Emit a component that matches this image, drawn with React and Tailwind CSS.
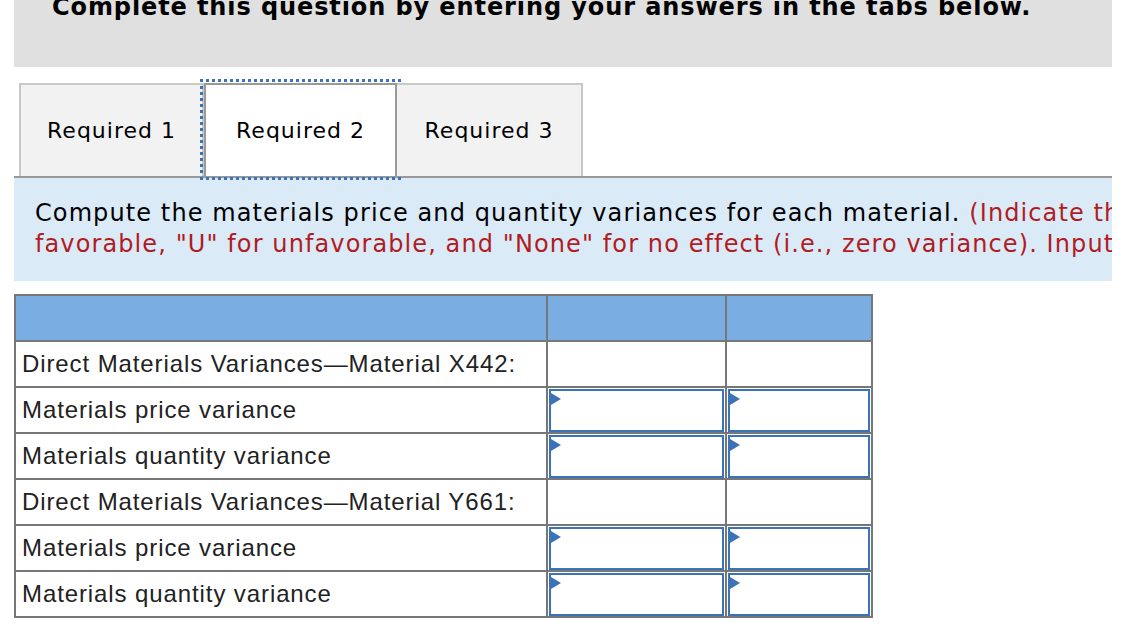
import React from "react";

const verdana = { fontFamily: '"DejaVu Sans", Verdana, sans-serif' };

function InputCell() {
  return (
    <td className="border-2 border-[#777777] p-0 h-[46px]">
      <div className="relative h-[43px] mx-[1px] border-2 border-[#3b73b9] bg-white">
        <div className="absolute left-0 top-[2px] w-0 h-0 border-t-[6px] border-b-[6px] border-l-[10px] border-t-transparent border-b-transparent border-l-[#3b73b9]" />
      </div>
    </td>
  );
}

function EmptyCell() {
  return <td className="border-2 border-[#777777] p-0 h-[46px] bg-white" />;
}

function LabelCell({ children }) {
  return (
    <td
      className="border-2 border-[#777777] pl-[6px] h-[46px] text-[24px] tracking-[0.9px] text-[#222222] whitespace-nowrap"
      style={{ fontFamily: '"Liberation Sans", Arial, sans-serif' }}
    >
      {children}
    </td>
  );
}

export default function App() {
  const rows = [
    { label: "Direct Materials Variances\u2014Material X442:", input: false },
    { label: "Materials price variance", input: true },
    { label: "Materials quantity variance", input: true },
    { label: "Direct Materials Variances\u2014Material Y661:", input: false },
    { label: "Materials price variance", input: true },
    { label: "Materials quantity variance", input: true },
  ];
  return (
    <div className="w-[1132px] h-[628px] bg-white overflow-hidden">
      <div className="ml-[14px] w-[1098px] h-[67px] bg-[#e0e0e0] overflow-hidden">
        <div
          className="mt-[-8px] pl-[38px] text-[24px] font-bold tracking-[0.9px] text-black whitespace-nowrap leading-[30px]"
          style={verdana}
        >
          Complete this question by entering your answers in the tabs below.
        </div>
      </div>

      <div className="ml-[14px] w-[1098px] mt-[16px]">
        <div className="flex pl-[5px] border-b-2 border-[#999999] text-[22px] tracking-[1px]" style={verdana}>
          <div className="w-[185px] h-[93px] bg-[#f2f2f2] border-2 border-b-0 border-[#c8c8c8] flex items-center justify-center text-black">
            Required 1
          </div>
          <div className="w-[193px] h-[93px] bg-white border-2 border-b-0 border-[#999999] flex items-center justify-center text-black outline-[3px] outline-dotted outline-[#3b73b9] outline-offset-[1px]">
            Required 2
          </div>
          <div className="w-[186px] h-[93px] bg-[#f2f2f2] border-2 border-b-0 border-l-0 border-[#c8c8c8] flex items-center justify-center text-black">
            Required 3
          </div>
        </div>
        <div className="h-[103px] bg-[#dbeaf7] overflow-hidden pt-[20px] pl-[21px]" style={verdana}>
          <p className="text-[24px] tracking-[1.1px] leading-[31px] text-black whitespace-nowrap">
            Compute the materials price and quantity variances for each material.{" "}
            <span className="text-[#b01c23]">
              (Indicate the effect of each variance by selecting "F" for
              <br />
              favorable, "U" for unfavorable, and "None" for no effect (i.e., zero variance). Input all amounts as positive values.)
            </span>
          </p>
        </div>
      </div>

      <table className="ml-[14px] mt-[13px] border-collapse border-2 border-[#777777]">
        <thead>
          <tr>
            <th className="w-[532px] h-[46px] bg-[#7aade2] border-2 border-[#777777] p-0" />
            <th className="w-[179px] h-[46px] bg-[#7aade2] border-2 border-[#777777] p-0" />
            <th className="w-[146px] h-[46px] bg-[#7aade2] border-2 border-[#777777] p-0" />
          </tr>
        </thead>
        <tbody>
          {rows.map((r, i) => (
            <tr key={i}>
              <LabelCell>{r.label}</LabelCell>
              {r.input ? <InputCell /> : <EmptyCell />}
              {r.input ? <InputCell /> : <EmptyCell />}
            </tr>
          ))}
        </tbody>
      </table>
    </div>
  );
}
